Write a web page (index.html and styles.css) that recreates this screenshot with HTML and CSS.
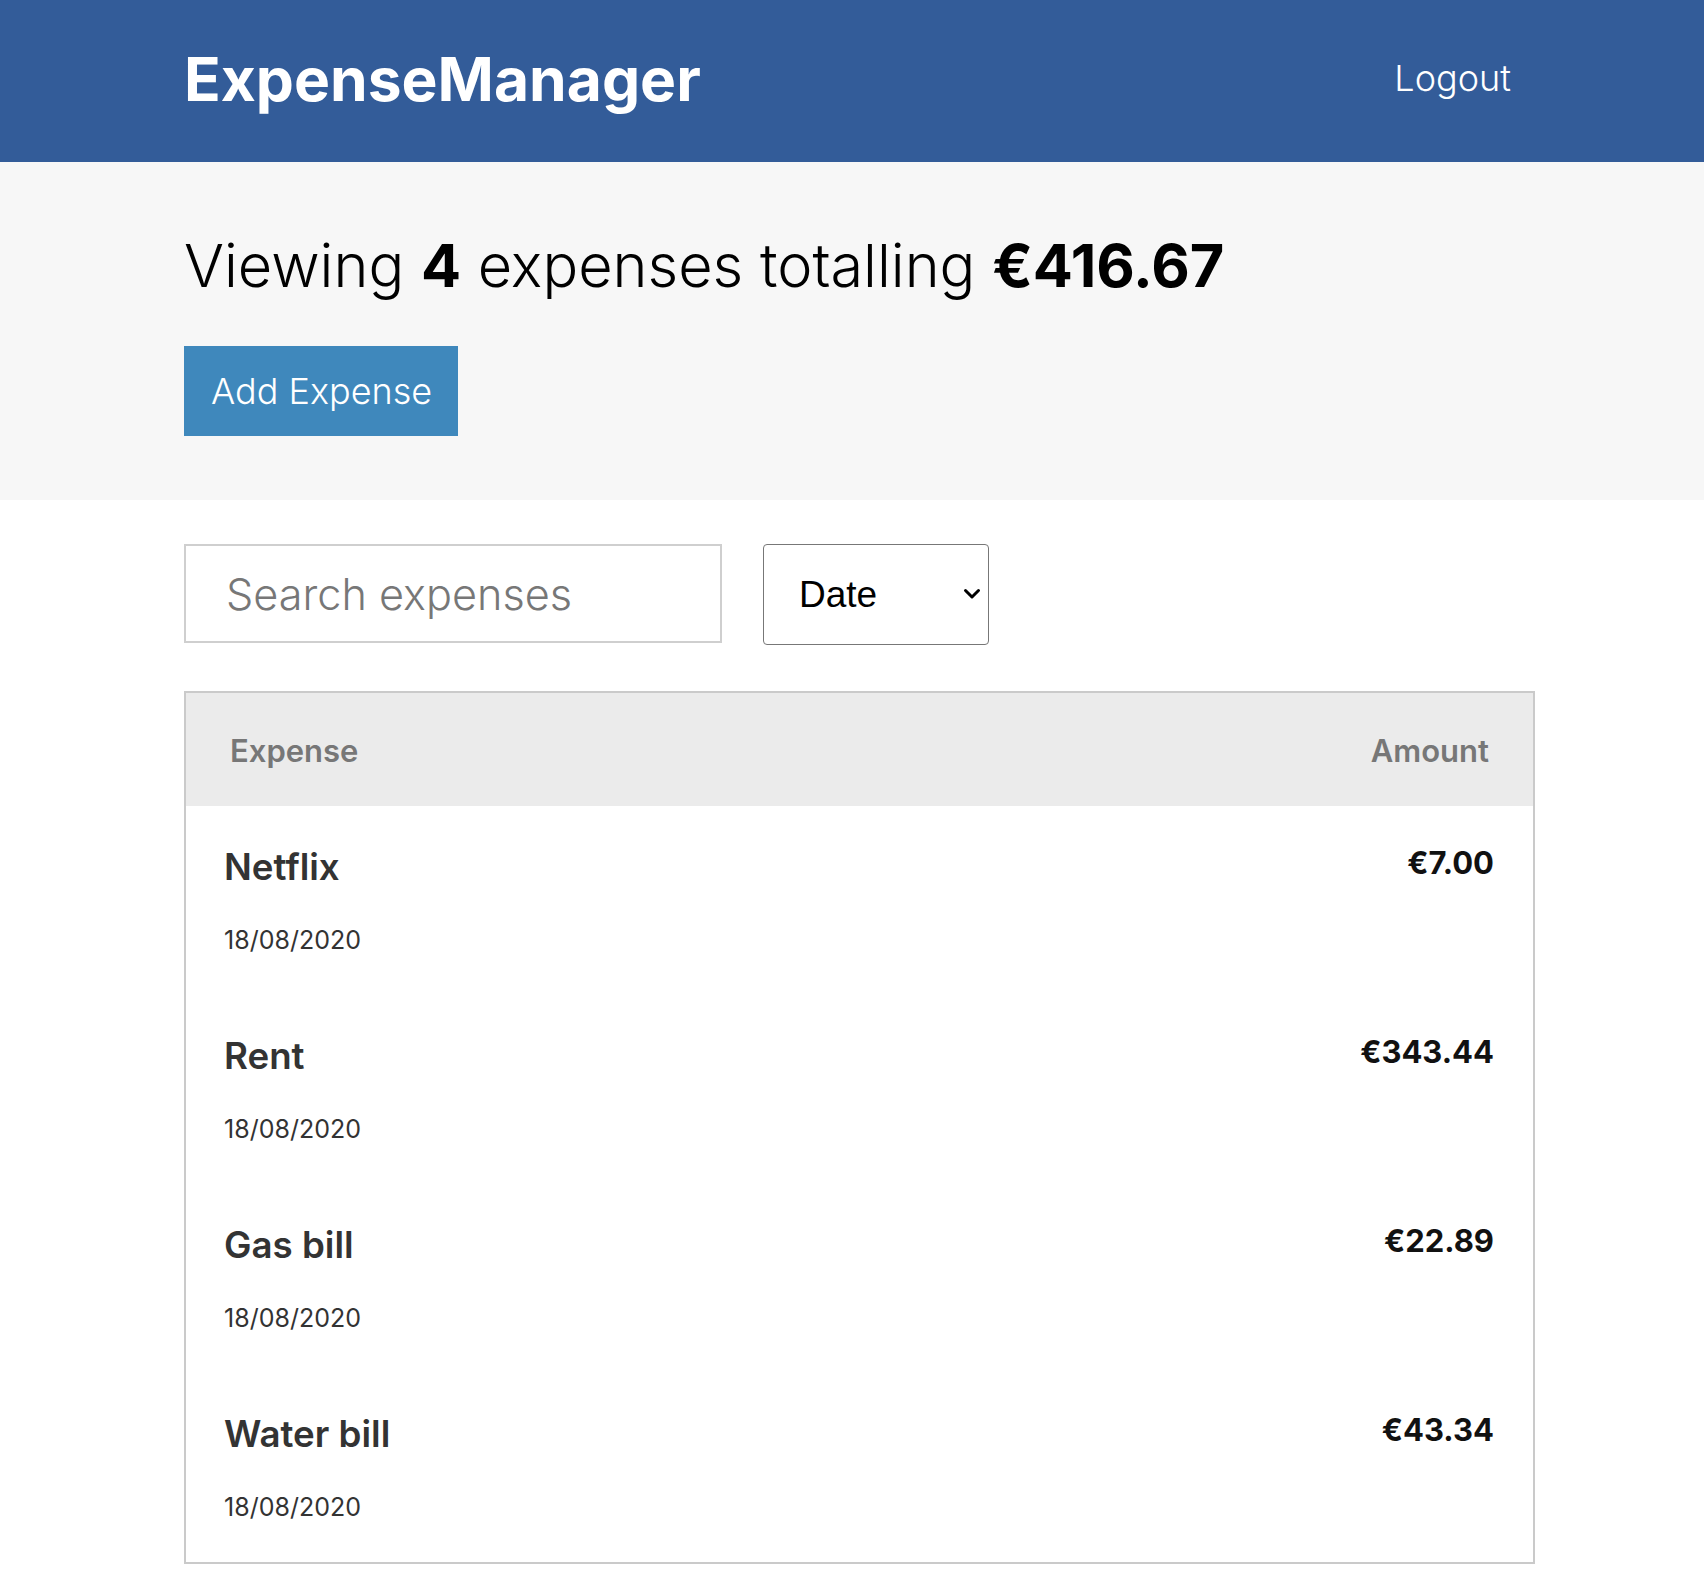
FILE: index.html
```html
<!DOCTYPE html>
<html lang="en">
<head>
<meta charset="utf-8">
<title>ExpenseManager</title>
<link rel="stylesheet" href="styles.css">
</head>
<body>
<header class="topbar">
  <div class="topbar-inner">
    <span class="brand">ExpenseManager</span>
    <a class="logout" href="#">Logout</a>
  </div>
</header>
<section class="summary">
  <h1 class="summary-title">Viewing <strong>4</strong> expenses totalling <strong>€416.67</strong></h1>
  <a class="btn" href="#">Add Expense</a>
</section>
<main class="content">
  <div class="filters">
    <input class="search" type="text" placeholder="Search expenses">
    <div class="select-wrap">
      <select class="sort">
        <option>Date</option>
        <option>Amount</option>
      </select>
      <svg class="chev" width="18" height="12" viewBox="0 0 18 12" aria-hidden="true"><path d="M2.5 2.5 L9 9 L15.5 2.5" fill="none" stroke="#000" stroke-width="3" stroke-linecap="round" stroke-linejoin="round"/></svg>
    </div>
  </div>
  <div class="list">
    <div class="list-head"><span>Expense</span><span>Amount</span></div>
    <div class="row">
      <div><h3 class="row-title">Netflix</h3><p class="row-date">18/08/2020</p></div>
      <h3 class="row-amount">€7.00</h3>
    </div>
    <div class="row">
      <div><h3 class="row-title">Rent</h3><p class="row-date">18/08/2020</p></div>
      <h3 class="row-amount">€343.44</h3>
    </div>
    <div class="row">
      <div><h3 class="row-title">Gas bill</h3><p class="row-date">18/08/2020</p></div>
      <h3 class="row-amount">€22.89</h3>
    </div>
    <div class="row">
      <div><h3 class="row-title">Water bill</h3><p class="row-date">18/08/2020</p></div>
      <h3 class="row-amount">€43.34</h3>
    </div>
  </div>
</main>
</body>
</html>
```
FILE: styles.css
```css
body {
  margin: 0;
  font-family: Inter, "Liberation Sans", sans-serif;
  color: #111;
  background: #fff;
}

.topbar {
  background: #335c99;
  box-sizing: border-box;
  height: 162px;
  padding-bottom: 4px;
  display: flex;
  align-items: center;
}

.topbar-inner {
  margin-left: 184px;
  width: 1327px;
  display: flex;
  justify-content: space-between;
  align-items: center;
}

.brand {
  font-size: 60.5px;
  font-weight: 700;
  color: #fff;
  line-height: 1.2;
}

.logout {
  font-size: 36px;
  font-weight: 300;
  color: #fff;
  text-decoration: none;
  line-height: 1.2;
}

.summary {
  background: #f7f7f7;
  padding: 67px 0 64px 184px;
}

.summary-title {
  margin: 0;
  font-size: 59.4px;
  font-weight: 300;
  line-height: 72px;
  color: #000;
}

.summary-title strong {
  font-weight: 700;
}

.btn {
  display: flex;
  align-items: center;
  box-sizing: border-box;
  width: 274px;
  height: 90px;
  margin-top: 45px;
  padding-left: 27px;
  background: #3f88bc;
  color: #fff;
  font-size: 36px;
  font-weight: 300;
  text-decoration: none;
}

.content {
  padding: 44px 0 0 184px;
  width: 1351px;
}

.filters {
  display: flex;
  align-items: flex-start;
  gap: 41px;
}

.search {
  box-sizing: border-box;
  width: 538px;
  height: 99px;
  margin: 0;
  padding: 0 40px;
  border: 2px solid #cfcfcf;
  border-radius: 0;
  font-family: Inter, "Liberation Sans", sans-serif;
  font-size: 43.2px;
  font-weight: 300;
  color: #333;
  background: #fff;
  outline: none;
}

.search::placeholder {
  color: #777;
}

.select-wrap {
  position: relative;
}

.sort {
  box-sizing: border-box;
  width: 226px;
  height: 101px;
  margin: 0;
  padding: 0 0 0 35px;
  border: 1.5px solid #777;
  border-radius: 4px;
  font-family: "Liberation Sans", Arial, sans-serif;
  font-size: 37px;
  color: #000;
  background: #fff;
  appearance: none;
  -webkit-appearance: none;
}

.chev {
  position: absolute;
  right: 8px;
  top: 44px;
  pointer-events: none;
}

.list {
  margin-top: 46px;
  border: 2px solid #cacaca;
}

.list-head {
  display: flex;
  justify-content: space-between;
  background: #ebebeb;
  padding: 40px 44px 37px 44px;
  font-size: 31px;
  font-weight: 600;
  line-height: 36px;
  color: #777;
}

.row {
  box-sizing: border-box;
  height: 189px;
  display: flex;
  justify-content: space-between;
  align-items: flex-start;
  padding: 39px 39px 0 38px;
}

.row-title {
  margin: 0;
  font-size: 36.7px;
  font-weight: 600;
  line-height: 43px;
  color: #333;
}

.row-date {
  margin: 37px 0 0;
  font-size: 25px;
  font-weight: 400;
  line-height: 30px;
  color: #333;
}

.row-amount {
  margin: 0;
  font-size: 31px;
  font-weight: 700;
  line-height: 36px;
  color: #111;
}
```
